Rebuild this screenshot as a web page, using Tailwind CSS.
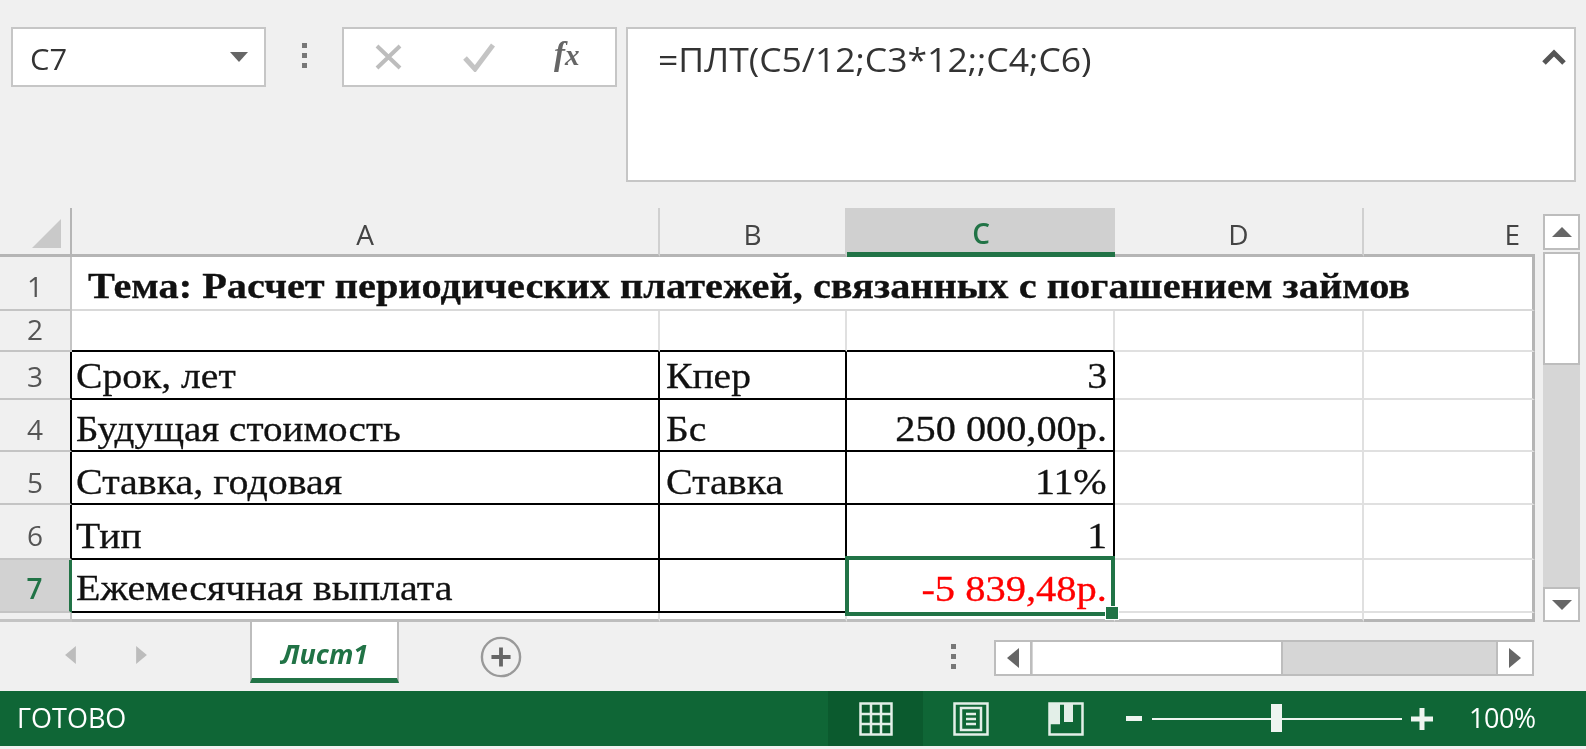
<!DOCTYPE html>
<html lang="ru">
<head>
<meta charset="UTF-8" />
<title>Excel</title>
<script src="https://cdn.jsdelivr.net/npm/@tailwindcss/browser@4"></script>
</head>
<body class="m-0 overflow-hidden bg-[#f0f0f0]">
<div class="w-[1586px] h-[749px] flex flex-col bg-[#f0f0f0] blur-[0.7px] font-['Open_Sans',sans-serif] text-[#444]">

  <!-- formula bar -->
  <div class="h-[208px] shrink-0 flex items-start pt-[27px] pl-[11px]">
    <div class="w-[255px] h-[60px] bg-white border-2 border-[#c6c6c6] flex items-center justify-between pl-[17px] pr-[16px]">
      <span class="text-[30px] leading-none pt-[4px] text-[#333] inline-block scale-x-[1.03] origin-left font-medium">C7</span>
      <svg width="18" height="10" viewBox="0 0 18 10"><path d="M0 0H18L9 10Z" fill="#666"/></svg>
    </div>
    <div class="w-[76px] h-[60px] flex flex-col items-center justify-center gap-[5px] pb-[4px]">
      <i class="w-[5px] h-[5px] bg-[#777] block"></i><i class="w-[5px] h-[5px] bg-[#777] block"></i><i class="w-[5px] h-[5px] bg-[#777] block"></i>
    </div>
    <div class="w-[275px] h-[60px] bg-white border-2 border-[#c6c6c6] flex items-center">
      <svg class="ml-[30px]" width="30" height="30" viewBox="0 0 30 30"><path d="M3 4L26 26M26 4L3 26" stroke="#bdbdbd" stroke-width="4" fill="none"/></svg>
      <svg class="ml-[58px]" width="34" height="30" viewBox="0 0 34 30"><path d="M3 16L13 27L31 3" stroke="#c4c4c4" stroke-width="5" fill="none"/></svg>
      <span class="ml-[58px] mb-[6px] font-['Liberation_Serif',serif] italic font-bold text-[33px] leading-none text-[#666]">f<span class="text-[29px]">x</span></span>
    </div>
    <div class="ml-[9px] w-[950px] h-[155px] bg-white border-2 border-[#c6c6c6] relative pl-[30px] pt-[11px]">
      <span class="text-[32px] leading-[40px] text-[#333] inline-block scale-x-[1.11] origin-left whitespace-nowrap">=ПЛТ(C5/12;C3*12;;C4;C6)</span>
      <svg class="absolute right-[8px] top-[20px]" width="24" height="16" viewBox="0 0 24 16"><path d="M2 14L12 4L22 14" stroke="#555" stroke-width="5" fill="none"/></svg>
    </div>
  </div>

  <!-- sheet + vertical scrollbar -->
  <div class="h-[414px] shrink-0 flex">
    <div class="relative w-[1535px] grid grid-cols-[72px_588px_187px_268px_249px_171px] grid-rows-[49px_54px_41px_48px_52px_53px_55px_53px_9px] font-['Liberation_Serif',serif] text-[36px] text-[#111] [-webkit-text-stroke:0.3px_#111]">

      <!-- header -->
      <div class="border-r-2 border-b-[3px] border-[#b5b5b5] relative">
        <svg class="absolute left-[32px] top-[11px]" width="29" height="29" viewBox="0 0 29 29"><path d="M29 0V29H0Z" fill="#c9c9c9"/></svg>
      </div>
      <div class="border-r-2 border-b-[3px] border-r-[#d0d0d0] border-b-[#b5b5b5] pt-[6px] flex items-center justify-center font-['Open_Sans',sans-serif] [-webkit-text-stroke:0] text-[28px] text-[#444]">A</div>
      <div class="border-r-2 border-b-[3px] border-r-[#d0d0d0] border-b-[#b5b5b5] pt-[6px] flex items-center justify-center font-['Open_Sans',sans-serif] [-webkit-text-stroke:0] text-[28px] text-[#444]">B</div>
      <div class="bg-[#d0d0d0] border-b-[5px] border-[#217346] pt-[6px] flex items-center justify-center font-['Open_Sans',sans-serif] [-webkit-text-stroke:0] font-semibold text-[28px] text-[#217346]">C</div>
      <div class="border-r-2 border-b-[3px] border-r-[#d0d0d0] border-b-[#b5b5b5] pt-[6px] flex items-center justify-center font-['Open_Sans',sans-serif] [-webkit-text-stroke:0] text-[28px] text-[#444]">D</div>
      <div class="border-b-[3px] border-[#b5b5b5] pt-[6px] flex items-center justify-end pr-[15px] font-['Open_Sans',sans-serif] [-webkit-text-stroke:0] text-[28px] text-[#444]">E</div>

      <!-- row 1 -->
      <div class="border-r-2 border-b-2 border-[#c4c4c4] pt-[6px] flex items-center justify-center font-['Open_Sans',sans-serif] [-webkit-text-stroke:0] text-[28px] text-[#555]">1</div>
      <div class="col-span-5 bg-white border-r-[3px] border-b-2 border-r-[#b5b5b5] border-b-[#d9d9d9] pt-[6px] flex items-center pl-[16px] font-bold whitespace-nowrap"><span class="inline-block scale-x-[1.121] origin-left">Тема: Расчет периодических платежей, связанных с погашением займов</span></div>

      <!-- row 2 -->
      <div class="border-r-2 border-b-2 border-[#c4c4c4] pb-[4px] flex items-center justify-center font-['Open_Sans',sans-serif] [-webkit-text-stroke:0] text-[28px] text-[#555]">2</div>
      <div class="bg-white border-r-2 border-r-[#e0e0e0] border-b-2 border-b-black"></div>
      <div class="bg-white border-r-2 border-r-[#e0e0e0] border-b-2 border-b-black"></div>
      <div class="bg-white border-r-2 border-b-2 border-r-[#e0e0e0] border-b-black"></div>
      <div class="bg-white border-r-2 border-b-2 border-[#e0e0e0]"></div>
      <div class="bg-white border-r-[3px] border-b-2 border-r-[#b5b5b5] border-b-[#e0e0e0]"></div>

      <!-- row 3 -->
      <div class="border-r-2 border-b-2 border-r-black border-b-[#c4c4c4] pt-[2px] flex items-center justify-center font-['Open_Sans',sans-serif] [-webkit-text-stroke:0] text-[28px] text-[#555]">3</div>
      <div class="bg-white border-r-2 border-b-2 border-black pt-[2px] flex items-center pl-[4px]"><span class="inline-block scale-x-[1.1] origin-left">Срок, лет</span></div>
      <div class="bg-white border-r-2 border-b-2 border-black pt-[2px] flex items-center pl-[6px]"><span class="inline-block scale-x-[1.1] origin-left">Кпер</span></div>
      <div class="bg-white border-r-2 border-b-2 border-black pt-[2px] flex items-center justify-end pr-[6px]"><span class="inline-block scale-x-[1.1] origin-right">3</span></div>
      <div class="bg-white border-r-2 border-b-2 border-[#e0e0e0]"></div>
      <div class="bg-white border-r-[3px] border-b-2 border-r-[#b5b5b5] border-b-[#e0e0e0]"></div>

      <!-- row 4 -->
      <div class="border-r-2 border-b-2 border-r-black border-b-[#c4c4c4] pt-[8px] flex items-center justify-center font-['Open_Sans',sans-serif] [-webkit-text-stroke:0] text-[28px] text-[#555]">4</div>
      <div class="bg-white border-r-2 border-b-2 border-black pt-[8px] flex items-center pl-[4px]"><span class="inline-block scale-x-[1.085] origin-left">Будущая стоимость</span></div>
      <div class="bg-white border-r-2 border-b-2 border-black pt-[8px] flex items-center pl-[6px]"><span class="inline-block scale-x-[1.1] origin-left">Бс</span></div>
      <div class="bg-white border-r-2 border-b-2 border-black pt-[8px] flex items-center justify-end pr-[6px]"><span class="inline-block scale-x-[1.12] origin-right whitespace-nowrap">250 000,00р.</span></div>
      <div class="bg-white border-r-2 border-b-2 border-[#e0e0e0]"></div>
      <div class="bg-white border-r-[3px] border-b-2 border-r-[#b5b5b5] border-b-[#e0e0e0]"></div>

      <!-- row 5 -->
      <div class="border-r-2 border-b-2 border-r-black border-b-[#c4c4c4] pt-[8px] flex items-center justify-center font-['Open_Sans',sans-serif] [-webkit-text-stroke:0] text-[28px] text-[#555]">5</div>
      <div class="bg-white border-r-2 border-b-2 border-black pt-[8px] flex items-center pl-[4px]"><span class="inline-block scale-x-[1.11] origin-left">Ставка, годовая</span></div>
      <div class="bg-white border-r-2 border-b-2 border-black pt-[8px] flex items-center pl-[6px]"><span class="inline-block scale-x-[1.11] origin-left">Ставка</span></div>
      <div class="bg-white border-r-2 border-b-2 border-black pt-[8px] flex items-center justify-end pr-[6px]"><span class="inline-block scale-x-[1.11] origin-right">11%</span></div>
      <div class="bg-white border-r-2 border-b-2 border-[#e0e0e0]"></div>
      <div class="bg-white border-r-[3px] border-b-2 border-r-[#b5b5b5] border-b-[#e0e0e0]"></div>

      <!-- row 6 -->
      <div class="border-r-2 border-b-2 border-r-black border-b-[#c4c4c4] pt-[6px] flex items-center justify-center font-['Open_Sans',sans-serif] [-webkit-text-stroke:0] text-[28px] text-[#555]">6</div>
      <div class="bg-white border-r-2 border-b-2 border-black pt-[8px] flex items-center pl-[4px]"><span class="inline-block scale-x-[1.1] origin-left">Тип</span></div>
      <div class="bg-white border-r-2 border-b-2 border-black"></div>
      <div class="bg-white border-r-2 border-b-2 border-black pt-[8px] flex items-center justify-end pr-[6px]"><span class="inline-block scale-x-[1.1] origin-right">1</span></div>
      <div class="bg-white border-r-2 border-b-2 border-[#e0e0e0]"></div>
      <div class="bg-white border-r-[3px] border-b-2 border-r-[#b5b5b5] border-b-[#e0e0e0]"></div>

      <!-- row 7 -->
      <div class="bg-[#d2d2d2] border-r-[3px] border-b-2 border-r-[#217346] border-b-[#c4c4c4] pt-[4px] flex items-center justify-center font-['Open_Sans',sans-serif] [-webkit-text-stroke:0] font-semibold text-[28px] text-[#217346]">7</div>
      <div class="bg-white border-r-2 border-b-2 border-black pt-[4px] flex items-center pl-[4px]"><span class="inline-block scale-x-[1.11] origin-left">Ежемесячная выплата</span></div>
      <div class="bg-white border-r-2 border-b-2 border-black"></div>
      <div class="bg-white pt-[4px] flex items-center justify-end pr-[8px] text-[#f00] [-webkit-text-stroke:0.3px_#f00]"><span class="inline-block scale-x-[1.125] origin-right whitespace-nowrap">-5 839,48р.</span></div>
      <div class="bg-white border-r-2 border-b-2 border-[#e0e0e0]"></div>
      <div class="bg-white border-r-[3px] border-b-2 border-r-[#b5b5b5] border-b-[#e0e0e0]"></div>

      <!-- partial row 8 -->
      <div class="border-r-2 border-b-[3px] border-[#c4c4c4]"></div>
      <div class="bg-white border-r-2 border-b-[3px] border-r-[#e0e0e0] border-b-[#bdbdbd]"></div>
      <div class="bg-white border-r-2 border-b-[3px] border-r-[#e0e0e0] border-b-[#bdbdbd]"></div>
      <div class="bg-white border-r-2 border-b-[3px] border-r-[#e0e0e0] border-b-[#bdbdbd]"></div>
      <div class="bg-white border-r-2 border-b-[3px] border-r-[#e0e0e0] border-b-[#bdbdbd]"></div>
      <div class="bg-white border-r-[3px] border-b-[3px] border-[#b5b5b5]"></div>

      <!-- selection over C7 -->
      <div class="absolute left-[845px] top-[348px] w-[270px] h-[60px] border-[4px] border-[#217346]"></div>
      <div class="absolute left-[1105px] top-[398px] w-[14px] h-[14px] bg-[#217346] border border-white"></div>
    </div>

    <!-- vertical scrollbar -->
    <div class="ml-[8px] w-[37px] h-[414px] flex flex-col pt-[6px]">
      <div class="h-[36px] shrink-0 bg-white border-2 border-[#bdbdbd] flex items-center justify-center">
        <svg width="20" height="10" viewBox="0 0 20 10"><path d="M10 0L20 10H0Z" fill="#666"/></svg>
      </div>
      <div class="h-[113px] shrink-0 mt-[2px] bg-white border-2 border-[#bdbdbd]"></div>
      <div class="h-[222px] shrink-0 bg-[#d6d6d6]"></div>
      <div class="h-[35px] shrink-0 bg-white border-2 border-[#bdbdbd] flex items-center justify-center">
        <svg width="20" height="10" viewBox="0 0 20 10"><path d="M0 0H20L10 10Z" fill="#666"/></svg>
      </div>
    </div>
  </div>

  <!-- sheet tabs -->
  <div class="h-[69px] shrink-0 flex items-start">
    <div class="w-[250px] h-[50px] mt-[8px] flex items-center pl-[65px] gap-[60px]">
      <svg width="11" height="18" viewBox="0 0 12 20"><path d="M12 0V20L0 10Z" fill="#bcbcbc"/></svg>
      <svg width="11" height="18" viewBox="0 0 12 20"><path d="M0 0V20L12 10Z" fill="#bcbcbc"/></svg>
    </div>
    <div class="w-[149px] h-[61px] bg-white border-x-2 border-[#bdbdbd] border-b-[5px] border-b-[#217346] pt-[8px] flex items-center justify-center font-bold italic text-[27px] text-[#217346]">Лист1</div>
    <div class="w-[206px] h-[68px] pt-[2px] flex items-center pl-[81px]">
      <svg width="42" height="42" viewBox="0 0 44 44"><circle cx="22" cy="22" r="20" fill="none" stroke="#999" stroke-width="2.5"/><path d="M22 12V32M12 22H32" stroke="#666" stroke-width="4"/></svg>
    </div>
    <div class="w-[389px] h-[68px] flex flex-col items-end justify-center gap-[5px] pr-[38px]">
      <i class="w-[5px] h-[5px] bg-[#777] block"></i><i class="w-[5px] h-[5px] bg-[#777] block"></i><i class="w-[5px] h-[5px] bg-[#777] block"></i>
    </div>
    <div class="mt-[18px] w-[540px] h-[36px] flex bg-[#d6d6d6] border-2 border-[#bdbdbd]">
      <div class="w-[36px] bg-white border-r-2 border-[#bdbdbd] flex items-center justify-center">
        <svg width="12" height="20" viewBox="0 0 12 20"><path d="M12 0V20L0 10Z" fill="#666"/></svg>
      </div>
      <div class="w-[250px] bg-white border-r-2 border-[#bdbdbd] ml-[1px]"></div>
      <div class="flex-1"></div>
      <div class="w-[36px] bg-white border-l-2 border-[#bdbdbd] flex items-center justify-center">
        <svg width="12" height="20" viewBox="0 0 12 20"><path d="M0 0V20L12 10Z" fill="#666"/></svg>
      </div>
    </div>
  </div>

  <!-- status bar -->
  <div class="h-[55px] shrink-0 bg-[#0f6636] flex items-center text-white">
    <span class="pl-[17px] w-[828px] text-[27px]">ГОТОВО</span>
    <div class="w-[95px] h-[55px] bg-[#0b5a2e] flex items-center justify-center">
      <svg width="34" height="34" viewBox="0 0 34 34" fill="none" stroke="#e3efe8" stroke-width="2.5"><rect x="1.5" y="1.5" width="31" height="31"/><path d="M12 1.5V32.5M22 1.5V32.5M1.5 12H32.5M1.5 22H32.5"/></svg>
    </div>
    <div class="w-[95px] flex justify-center">
      <svg width="36" height="34" viewBox="0 0 36 34" fill="none" stroke="#e3efe8" stroke-width="2.5"><rect x="1.5" y="1.5" width="33" height="31"/><rect x="8" y="6" width="20" height="22"/><path d="M13 12H23M13 17H23M13 22H23"/></svg>
    </div>
    <div class="w-[95px] flex justify-center">
      <svg width="36" height="34" viewBox="0 0 36 34" fill="none" stroke="#e3efe8" stroke-width="2.5"><path d="M1.5 1.5H34.5V32.5H1.5ZM1.5 21H12"/><path d="M2 2H12V21H2ZM16 2H25V20H16Z" fill="#e3efe8" stroke="none"/></svg>
    </div>
    <div class="ml-[13px] w-[16px] h-[5px] bg-[#eef5f0]"></div>
    <div class="ml-[10px] w-[250px] h-[2px] bg-[#eef5f0] relative">
      <div class="absolute left-[119px] -top-[14px] w-[11px] h-[28px] bg-[#eef5f0]"></div>
    </div>
    <svg class="ml-[9px]" width="22" height="22" viewBox="0 0 22 22"><path d="M11 0V22M0 11H22" stroke="#eef5f0" stroke-width="5"/></svg>
    <span class="ml-[36px] text-[27px] tracking-[-0.5px]">100%</span>
  </div>
  <div class="flex-1 bg-[#f0f0f0]"></div>
</div>
</body>
</html>
